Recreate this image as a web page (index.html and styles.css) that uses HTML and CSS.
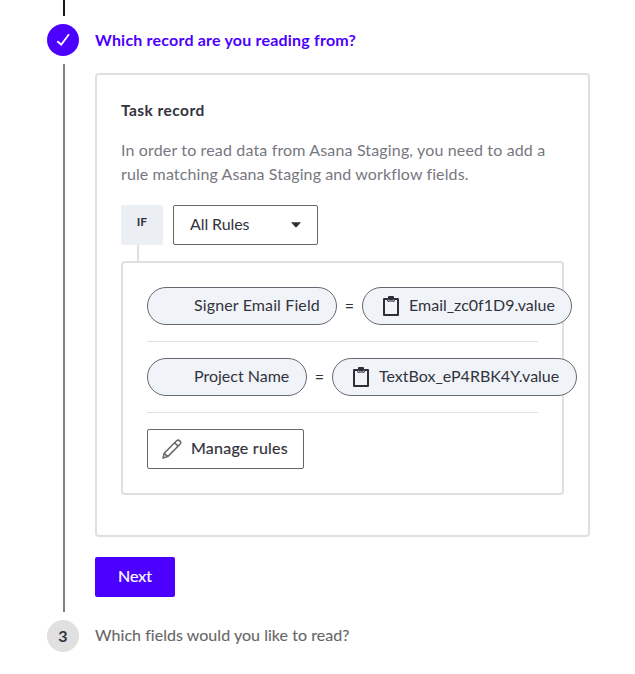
FILE: index.html
```html
<!DOCTYPE html>
<html lang="en">
<head>
<meta charset="utf-8">
<title>Read from Asana Staging</title>
<link rel="stylesheet" href="styles.css">
</head>
<body>
<main class="stepper">
  <div class="stub"></div>
  <section class="step step-active">
    <div class="rail">
      <div class="badge badge-done">
        <svg width="16" height="16" viewBox="0 0 16 16" fill="none" stroke="#fff" stroke-width="1.9"><path d="M2.3 9.2 6.2 12.7 14 2.3"/></svg>
      </div>
      <div class="line"></div>
    </div>
    <div class="content">
      <h2 class="step-title">Which record are you reading from?</h2>
      <div class="card">
        <h3 class="card-title">Task record</h3>
        <p class="description"><span class="line-one">In order to read data from Asana Staging, you need to add a</span><br><span class="line-two">rule matching Asana Staging and workflow fields.</span></p>
        <div class="condition">
          <div class="if">IF</div>
          <div class="select"><span class="label label-all">All Rules</span><svg width="10" height="6" viewBox="0 0 10 6"><path fill="#2e2e38" d="M0 .3h10L5.7 5.1q-.7.6-1.4 0z"/></svg></div>
        </div>
        <div class="connector"></div>
        <div class="rules">
          <div class="rule">
            <div class="pill pill-signer"><span class="label label-signer">Signer Email Field</span></div>
            <span class="equals">=</span>
            <div class="pill pill-email">
              <svg width="16" height="20" viewBox="0 0 16 20"><path fill="none" stroke="#2e2e38" stroke-width="2" stroke-linejoin="round" d="M1 3h14v16H1z"/><path fill="#2e2e38" d="M5 2V1q0-1 1-1h4q1 0 1 1v1h1v2q0 2-2 2H6Q4 6 4 4V2z"/><path fill="none" stroke="#f0f4f8" stroke-width=".9" d="M5.3 3.6Q5.5 5 6.5 5h3q1 0 1.2-1.4"/></svg>
              <span class="label">Email_zc0f1D9.value</span>
            </div>
          </div>
          <div class="rule">
            <div class="pill pill-project"><span class="label">Project Name</span></div>
            <span class="equals">=</span>
            <div class="pill pill-textbox">
              <svg width="16" height="20" viewBox="0 0 16 20"><path fill="none" stroke="#2e2e38" stroke-width="2" stroke-linejoin="round" d="M1 3h14v16H1z"/><path fill="#2e2e38" d="M5 2V1q0-1 1-1h4q1 0 1 1v1h1v2q0 2-2 2H6Q4 6 4 4V2z"/><path fill="none" stroke="#f0f4f8" stroke-width=".9" d="M5.3 3.6Q5.5 5 6.5 5h3q1 0 1.2-1.4"/></svg>
              <span class="label">TextBox_eP4RBK4Y.value</span>
            </div>
          </div>
          <button class="manage" type="button"><svg width="20" height="20" viewBox="0 0 20 20" fill="none" stroke="#666" stroke-width="1.5" stroke-linejoin="round"><path d="M1 19 2.2 14.2 14.6 1.8Q16.2.4 17.8 1.9 19.5 3.5 18 5.2L5.7 17.6zM2.2 14.2 5.7 17.6M12.6 3.8 16.1 7.1"/></svg><span class="label label-manage">Manage rules</span></button>
        </div>
      </div>
      <button class="next" type="button">Next</button>
    </div>
  </section>
  <section class="step">
    <div class="badge badge-number">3</div>
    <h2 class="pending-title">Which fields would you like to read?</h2>
  </section>
</main>
</body>
</html>
```
FILE: styles.css
```css
* { box-sizing: border-box; }
body {
  margin: 0;
  background: #fff;
  color: #33333d;
  font-family: Lato, "Liberation Sans", sans-serif;
  font-size: 16px;
}
h2, h3, p { margin: 0; font-weight: 400; }
svg { display: block; flex: none; }
button { font: inherit; color: inherit; cursor: pointer; }
.stepper { width: 635px; height: 674px; padding-left: 47px; overflow: hidden; }
.stub { width: 2px; height: 16px; margin: 0 0 8px 16px; background: #111820; }
.step { display: flex; gap: 16px; }
.step-active { height: 596px; }
.rail { display: flex; flex-direction: column; width: 32px; flex: none; }
.badge {
  display: flex; align-items: center; justify-content: center;
  width: 32px; height: 32px; flex: none; border-radius: 50%;
}
.badge-done { background: #4c00ff; }
.badge-number { padding-bottom: 2px; background: #e0e0e0; font-size: 16px; font-weight: 700; }
.line { width: 2px; height: 548px; margin: 8px 0 0 16px; background: #808080; }
.content { width: 495px; flex: none; }
.step-title, .pending-title { height: 32px; font-size: 16px; line-height: 31px; white-space: nowrap; }
.step-title { color: #4c00ff; font-weight: 700; letter-spacing: .2px; margin-bottom: 17px; }
.pending-title { line-height: 29px; color: #666; letter-spacing: .04px; -webkit-text-stroke: .1px; }
.card { height: 464px; padding: 24px; border: 2px solid #e0e0e0; border-radius: 4px; }
.card-title { height: 24px; line-height: 23px; font-size: 15.5px; font-weight: 700; letter-spacing: .45px; margin-bottom: 15px; white-space: nowrap; }
.description { height: 48px; line-height: 24px; margin-bottom: 19px; color: #777781; white-space: nowrap; }
.line-one { letter-spacing: .15px; }
.line-two { letter-spacing: .11px; }
.condition { display: flex; gap: 10px; }
.if {
  width: 42px; height: 40px; border-radius: 2px;
  background: #ebeff4; font-size: 12px; font-weight: 700; line-height: 34px; text-align: center;
}
.select {
  display: flex; align-items: center; justify-content: space-between;
  width: 145px; height: 40px; padding: 0 16px 0 16px;
  border: 1px solid #666; border-radius: 2px;
}
.label { padding-bottom: 3px; }
.label-all { letter-spacing: -.1px; }
.label-signer { letter-spacing: .13px; }
.label-manage { letter-spacing: .24px; -webkit-text-stroke: .2px; }
.connector { width: 2px; height: 16px; margin-left: 16px; background: #e0e0e0; }
.rules { width: 443px; height: 234px; padding: 24px; border: 2px solid #e0e0e0; border-radius: 4px; }
.rule {
  display: flex; align-items: flex-start; height: 55px; margin-bottom: 16px;
  border-bottom: 1px solid #e0e0e0; white-space: nowrap;
}
.pill {
  display: flex; align-items: center; height: 38px; flex: none;
  border: 1px solid #666871; border-radius: 19px; background: #f0f4f8;
}
.pill-signer { width: 190px; padding-left: 46px; }
.pill-project { width: 160px; padding-left: 46px; }
.pill-email { width: 210px; padding-left: 20px; gap: 10px; }
.pill-textbox { width: 245px; padding-left: 20px; gap: 10px; }
.equals { width: 25px; flex: none; line-height: 38px; text-align: center; }
.manage {
  display: flex; align-items: center; gap: 9px;
  width: 157px; height: 40px; padding: 0 0 0 14px;
  border: 1px solid #666; border-radius: 2px; background: #fff;
}
.next {
  width: 80px; height: 40px; margin-top: 20px; padding: 0 0 3px;
  border: 0; border-radius: 2px; background: #4c00ff; color: #fff; -webkit-text-stroke: .2px;
}
```
